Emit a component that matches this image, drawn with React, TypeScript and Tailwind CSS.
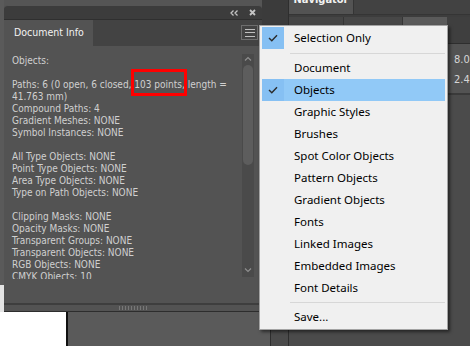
import React from "react";

const infoLines: string[] = [
  "Objects:",
  "",
  "PATHS",
  "41.763 mm)",
  "Compound Paths: 4",
  "Gradient Meshes: NONE",
  "Symbol Instances: NONE",
  "",
  "All Type Objects: NONE",
  "Point Type Objects: NONE",
  "Area Type Objects: NONE",
  "Type on Path Objects: NONE",
  "",
  "Clipping Masks: NONE",
  "Opacity Masks: NONE",
  "Transparent Groups: NONE",
  "Transparent Objects: NONE",
  "RGB Objects: NONE",
  "CMYK Objects: 10",
];

const menuItems = [
  { label: "Document" },
  { label: "Objects", checked: true, active: true },
  { label: "Graphic Styles" },
  { label: "Brushes" },
  { label: "Spot Color Objects" },
  { label: "Pattern Objects" },
  { label: "Gradient Objects" },
  { label: "Fonts" },
  { label: "Linked Images" },
  { label: "Embedded Images" },
  { label: "Font Details" },
];

function Check() {
  return (
    <svg width="10" height="8" viewBox="0 0 10 8">
      <path d="M1 4 L3.8 6.8 L9 1.2" fill="none" stroke="#2a2a2a" strokeWidth="1.4" />
    </svg>
  );
}

function Chevron({ up }: { up?: boolean }) {
  return (
    <svg width="8" height="5" viewBox="0 0 8 5">
      <path d={up ? "M1 4.5 L4 1.5 L7 4.5" : "M1 0.5 L4 3.5 L7 0.5"} fill="none" stroke="#8f8f8f" strokeWidth="1.2" />
    </svg>
  );
}

function MenuRow({ label, checked, active }: { label: string; checked?: boolean; active?: boolean }) {
  return (
    <div className={`flex h-[22px] items-center ${active ? "bg-[#91c9f7]" : ""}`}>
      <div className={`flex h-full w-[22px] items-center justify-center ${checked ? "bg-[#86c0f3]" : ""}`}>
        {checked && <Check />}
      </div>
      <span className="ml-[10px]">{label}</span>
    </div>
  );
}

function Separator({ h }: { h: string }) {
  return (
    <div className={`flex ${h} items-center`}>
      <div className="ml-[28px] h-px flex-1 bg-[#d7d7d7]" />
    </div>
  );
}

function DocumentInfoPanel() {
  return (
    <div className="mt-[5px] flex h-[307px] w-[258px] flex-col font-['DejaVu_Sans_Condensed','DejaVu_Sans',sans-serif] [font-stretch:condensed]">
      {/* title bar */}
      <div className="flex h-[14px] items-center justify-end gap-[11px] rounded-t-[4px] border-t border-[#555] bg-[#3c3c3c] pr-[6px]">
        <svg width="8" height="6" viewBox="0 0 8 6">
          <path d="M3.5 0.5 L1 3 L3.5 5.5 M7.5 0.5 L5 3 L7.5 5.5" fill="none" stroke="#c4c4c4" strokeWidth="1.3" />
        </svg>
        <svg width="7" height="7" viewBox="0 0 7 7">
          <path d="M1 1 L6 6 M6 1 L1 6" stroke="#c4c4c4" strokeWidth="1.8" />
        </svg>
      </div>

      {/* tab row */}
      <div className="flex h-[27px] border-t border-[#2f2f2f] bg-[#434343]">
        <div className="flex w-[89px] items-center bg-[#535353] pl-[10px] text-[10.5px] text-[#f2f2f2]">
          Document Info
        </div>
        <div className="flex-1" />
        <div className="mr-[4px] mt-[5px] flex h-[15px] w-[17px] flex-col items-center justify-center gap-[2.5px] border border-[#6e6e6e]">
          <div className="h-px w-[10px] bg-[#c0c0c0]" />
          <div className="h-px w-[10px] bg-[#c0c0c0]" />
          <div className="h-px w-[10px] bg-[#c0c0c0]" />
        </div>
      </div>

      {/* content */}
      <div className="flex h-[257px] bg-[#535353]">
        <div className="h-[233px] w-[230px] overflow-hidden pl-[8px] pt-[9px] text-[10px] leading-[12px] text-[#d0d0d0]">
          {infoLines.map((line, i) =>
            line === "PATHS" ? (
              <div key={i} className="whitespace-nowrap">
                Paths: 6 (0 open, 6 closed,{" "}
                <span className="relative">
                  103 points,
                  <span className="absolute -bottom-[6px] -left-[3px] -right-[2px] -top-[10px] border-[3px] border-[#ff0000]" />
                </span>{" "}
                length =
              </div>
            ) : (
              <div key={i} className="h-[12px] whitespace-nowrap">
                {line}
              </div>
            )
          )}
        </div>
        <div className="ml-auto mr-[8px] mt-[8px] flex h-[223px] w-[12px] flex-col items-center bg-[#4a4a4a]">
          <div className="mt-[2px]">
            <Chevron up />
          </div>
          <div className="mt-[4px] h-[100px] w-[10px] rounded-full bg-[#5d5d5d]" />
          <div className="flex-1" />
          <div className="mb-[4px]">
            <Chevron />
          </div>
        </div>
      </div>

      {/* resize grip */}
      <div className="flex h-[9px] items-center justify-center border-b border-t-2 border-[#3e3e3e] border-b-[#2d2d2d] bg-[#535353]">
        <div className="flex gap-[2px]">
          {[0, 1, 2, 3, 4, 5, 6, 7, 8, 9].map((k) => (
            <div key={k} className="h-[4px] w-px bg-[#777]" />
          ))}
        </div>
      </div>
    </div>
  );
}

function NavigatorPanel() {
  return (
    <div className="flex h-full w-[182px] flex-col border-l border-[#2e2e2e] bg-[#4b4b4b] font-['DejaVu_Sans_Condensed','DejaVu_Sans',sans-serif] [font-stretch:condensed]">
      <div className="flex h-[14px] bg-[#424242]">
        <div className="flex w-[65px] justify-center overflow-hidden border-r border-[#353535] bg-[#535353]">
          <span className="-mt-[7px] text-[11px] font-bold leading-[14px] text-[#f2f2f2]">Navigator</span>
        </div>
      </div>
      <div className="h-[3px] border-t border-[#353535] bg-[#3d3d3d]" />
      <div className="flex h-[27px] border-b border-[#2e2e2e] bg-[#3e3e3e]">
        <div className="w-[55px] border-r border-[#353535] bg-[#454545]" />
        <div className="w-[59px] border-r border-[#353535] bg-[#474747]" />
        <div className="w-[44px] bg-[#5a5a5a]" />
        <div className="flex-1 bg-[#3f3f3f]" />
      </div>
      <div className="flex h-[49px] flex-col gap-[8px] whitespace-nowrap bg-[#535353] pl-[165px] pt-[10px] text-[11px] leading-[12px] text-[#d6d6d6]">
        <span>8.0%</span>
        <span>2.4</span>
      </div>
      <div className="h-[2px] bg-[#3a3a3a]" />
      <div className="flex-1 bg-[#4b4b4b]" />
    </div>
  );
}

export default function App() {
  return (
    <div className="relative flex h-[346px] w-[470px] overflow-hidden bg-[#555555]">
      <div className="flex w-[288px] flex-col">
        <div className="flex h-[312px]">
          <div className="flex w-[4px] flex-col">
            <div className="h-[285px] bg-[#5a5a5a]" />
            <div className="flex-1 bg-[#e4e4e4]" />
          </div>
          <DocumentInfoPanel />
          <div className="flex-1 bg-[#3b3b3b]" />
        </div>
        <div className="flex flex-1">
          <div className="w-[66px] bg-white" />
          <div className="w-[2px] bg-[#111]" />
          <div className="w-[202px] bg-[#5a5a5a]" />
          <div className="w-px bg-[#2e2e2e]" />
          <div className="flex-1 bg-[#4b4b4b]" />
        </div>
      </div>
      <NavigatorPanel />

      {/* flyout menu */}
      <div className="absolute left-[259px] top-[25px] h-[305px] w-[189px] border border-[#a3a3a3] bg-[#f0f0f0] px-[2px] py-px font-['Noto_Sans','Open_Sans',sans-serif] text-[11.5px] text-black shadow-[2px_2px_3px_rgba(0,0,0,0.5)]">
        <MenuRow label="Selection Only" checked />
        <Separator h="h-[8px]" />
        {menuItems.map((m) => (
          <MenuRow key={m.label} label={m.label} checked={m.checked} active={m.active} />
        ))}
        <Separator h="h-[7px]" />
        <MenuRow label="Save..." />
      </div>
    </div>
  );
}
